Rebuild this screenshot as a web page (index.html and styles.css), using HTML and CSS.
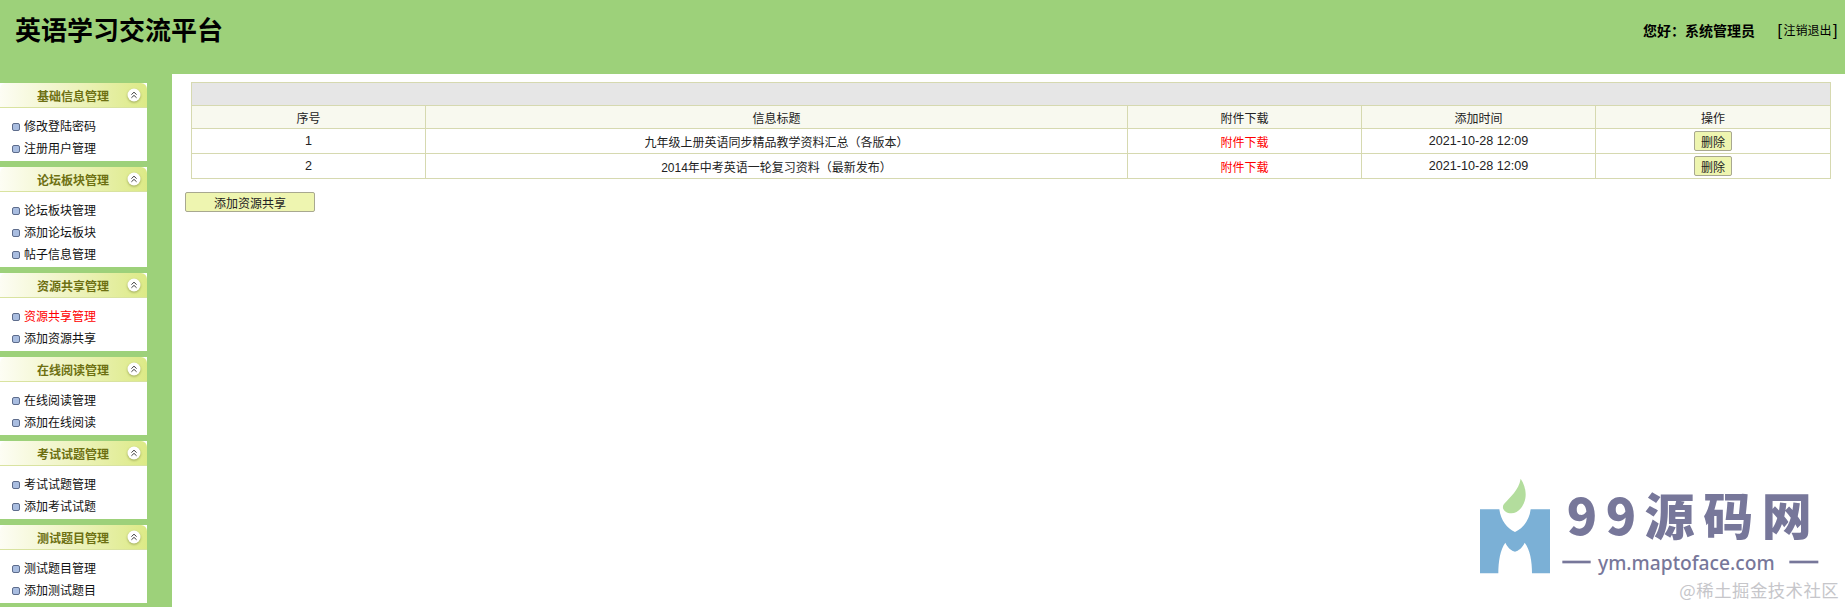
FILE: index.html
```html
<!DOCTYPE html>
<html lang="zh-CN">
<head>
  <meta charset="UTF-8" />
  <title>英语学习交流平台</title>
  <link rel="stylesheet" href="styles.css">
</head>
<body>
  <svg class="icon-defs" width="0" height="0">
    <symbol id="chevrons" viewBox="0 0 14 14">
      <circle cx="7" cy="7" r="6.5" fill="#fff" />
      <path d="M4.4 6.6 7 4.2l2.6 2.4M4.4 9.8 7 7.4l2.6 2.4" fill="none" stroke="#444" stroke-width="1" />
    </symbol>
  </svg>

  <header class="top">
    <h1>英语学习交流平台</h1>
    <div class="user">
      <b>您好：系统管理员</b>
      <a href="#"><span class="br">[</span>注销退出<span class="br">]</span></a>
    </div>
  </header>

  <div class="main">
    <aside class="side">
      <section class="panel">
        <div class="panel-head">
          <span>基础信息管理</span>
          <svg class="toggle"><use href="#chevrons" /></svg>
        </div>
        <ul>
          <li>修改登陆密码</li>
          <li>注册用户管理</li>
        </ul>
      </section>
      <section class="panel">
        <div class="panel-head">
          <span>论坛板块管理</span>
          <svg class="toggle"><use href="#chevrons" /></svg>
        </div>
        <ul>
          <li>论坛板块管理</li>
          <li>添加论坛板块</li>
          <li>帖子信息管理</li>
        </ul>
      </section>
      <section class="panel">
        <div class="panel-head">
          <span>资源共享管理</span>
          <svg class="toggle"><use href="#chevrons" /></svg>
        </div>
        <ul>
          <li class="active">资源共享管理</li>
          <li>添加资源共享</li>
        </ul>
      </section>
      <section class="panel">
        <div class="panel-head">
          <span>在线阅读管理</span>
          <svg class="toggle"><use href="#chevrons" /></svg>
        </div>
        <ul>
          <li>在线阅读管理</li>
          <li>添加在线阅读</li>
        </ul>
      </section>
      <section class="panel">
        <div class="panel-head">
          <span>考试试题管理</span>
          <svg class="toggle"><use href="#chevrons" /></svg>
        </div>
        <ul>
          <li>考试试题管理</li>
          <li>添加考试试题</li>
        </ul>
      </section>
      <section class="panel">
        <div class="panel-head">
          <span>测试题目管理</span>
          <svg class="toggle"><use href="#chevrons" /></svg>
        </div>
        <ul>
          <li>测试题目管理</li>
          <li>添加测试题目</li>
        </ul>
      </section>
    </aside>

    <main class="content">
      <table class="list">
        <colgroup>
          <col class="col-s">
          <col class="col-l">
          <col class="col-s">
          <col class="col-s">
          <col class="col-e">
        </colgroup>
        <tr class="title-row"><td colspan="5"></td></tr>
        <tr class="head-row">
          <td>序号</td>
          <td>信息标题</td>
          <td>附件下载</td>
          <td>添加时间</td>
          <td>操作</td>
        </tr>
        <tr>
          <td class="num">1</td>
          <td>九年级上册英语同步精品教学资料汇总（各版本）</td>
          <td><a class="file" href="#">附件下载</a></td>
          <td class="num">2021-10-28 12:09</td>
          <td><button class="btn-del">删除</button></td>
        </tr>
        <tr>
          <td class="num">2</td>
          <td>2014年中考英语一轮复习资料（最新发布）</td>
          <td><a class="file" href="#">附件下载</a></td>
          <td class="num">2021-10-28 12:09</td>
          <td><button class="btn-del">删除</button></td>
        </tr>
      </table>
      <button class="btn-add">添加资源共享</button>
    </main>
  </div>

  <!-- watermark sits over the page corner -->
  <svg class="watermark" viewBox="0 0 1155 441" width="385" height="147">
    <path d="M132 132c18-22 44-40 50-76 16 24 22 58 4 84-8 12-20 20-32 20-18 0-32-14-22-28z" fill="#b3dd9d" />
    <path fill-rule="evenodd" fill="#7bb0d6" d="M60 148h58c4 34 24 58 47 68 23-10 43-34 47-68h58v192H60zM115 340h101c0-36-6-72-22-92-8 16-18 24-29 27-11-3-21-11-29-27-15 20-21 56-21 92z" />
    <text class="wm-big" x="320" y="224" textLength="735" lengthAdjust="spacing">99源码网</text>
    <rect x="307" y="302" width="85" height="8" fill="#77779a" />
    <rect x="988" y="302" width="87" height="8" fill="#77779a" />
    <text class="wm-url" x="414" y="330" textLength="530" lengthAdjust="spacingAndGlyphs">ym.maptoface.com</text>
    <text class="wm-credit" x="658" y="412" textLength="478">@稀土掘金技术社区</text>
  </svg>
</body>
</html>
```

FILE: styles.css
```css
* {
  box-sizing: border-box;
}

body {
  margin: 0;
  height: 607px;
  overflow: hidden;
  position: relative;
  background: #9dd17a;
  font-family: "Liberation Sans", "Noto Sans CJK SC", sans-serif;
  font-size: 12px;
  color: #111;
}

.icon-defs {
  position: absolute;
}

.top {
  height: 74px;
  display: flex;
  justify-content: space-between;
  padding: 15px 6px 0 15px;
}

.top h1 {
  margin: 0;
  font-size: 26px;
  line-height: 32px;
  color: #000;
}

.user {
  display: flex;
  align-items: center;
  height: 30px;
  gap: 21px;
  color: #000;
}

.user b {
  font-size: 14px;
}

.user a {
  color: #000;
  text-decoration: none;
  font-size: 12px;
}

.user .br {
  font-size: 16px;
  padding: 0 1.5px;
  vertical-align: -1px;
  line-height: 1;
}

.main {
  display: flex;
  height: 533px;
}

.side {
  width: 172px;
  flex-shrink: 0;
  padding-top: 9px;
}

.panel {
  width: 147px;
  margin-bottom: 6px;
  background: #fff;
}

.panel-head {
  height: 25px;
  display: flex;
  align-items: center;
  padding: 0 6px 0 37px;
  justify-content: space-between;
  border-radius: 6px 6px 0 0;
  border-bottom: 1px solid #d9e3a0;
  background: linear-gradient(to right, #fdfdf4, #eef3bf 50%, #dcea86);
  color: #6d7012;
  font-weight: bold;
}

.toggle {
  width: 14px;
  height: 14px;
  filter: drop-shadow(0 1px 1px rgba(90, 100, 30, 0.5));
}

.panel ul {
  list-style: none;
  margin: 0;
  padding: 8px 0 1px;
}

.panel li {
  height: 22px;
  line-height: 22px;
  padding-left: 24px;
  position: relative;
}

.panel li::before {
  content: "";
  position: absolute;
  left: 12px;
  top: 7px;
  width: 6px;
  height: 6px;
  border-radius: 2px;
  border: 1px solid #5d6c8c;
  background: #a9bde0;
}

.panel li.active {
  color: #f00;
}

.content {
  flex: 1;
  background: #fff;
  padding: 8px 14px 0 13px;
}

.list {
  width: 1640px;
  margin-left: 6px;
  border-collapse: collapse;
  table-layout: fixed;
  text-align: center;
}

.col-s {
  width: 234px;
}

.col-l {
  width: 702px;
}

.col-e {
  width: 235px;
}

.list td {
  border: 1px solid #d6d9b0;
  height: 25px;
  padding: 0;
  color: #222;
}

.list .title-row td {
  height: 23px;
  background: #e6e6e6;
}

.list .head-row td {
  height: 23px;
  background: #f8f9ef;
}

.list .num {
  font-size: 12.6px;
}

.file {
  color: #f00;
  text-decoration: none;
}

.btn-del,
.btn-add {
  font-family: inherit;
  font-size: 12px;
  color: #222;
  background: #eef5b0;
  border: 1px solid #a8a890;
  border-radius: 2px;
  padding: 0;
}

.btn-del {
  display: block;
  width: 38px;
  height: 20px;
  margin: 0 auto;
}

.btn-add {
  display: block;
  width: 130px;
  height: 20px;
  margin-top: 13px;
}

.watermark {
  position: absolute;
  left: 1460px;
  top: 460px;
}

.wm-big {
  font-family: "Noto Sans CJK SC", sans-serif;
  font-size: 150px;
  font-weight: 900;
  fill: #77779a;
}

.wm-url {
  font-family: "Noto Sans", sans-serif;
  font-size: 60px;
  font-weight: 500;
  fill: #77779a;
}

.wm-credit {
  font-family: "Noto Sans CJK SC", sans-serif;
  font-size: 52px;
  fill: #c6c6ca;
}
```
